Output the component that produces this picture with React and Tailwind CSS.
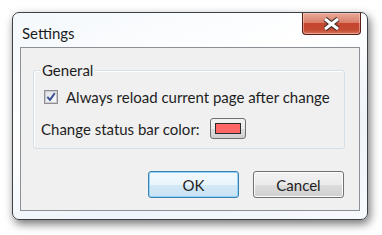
import React from "react";

function CloseX() {
  return (
    <svg width="19" height="14" viewBox="0 0 19 14">
      <g strokeLinecap="butt">
        <path d="M3 2 L16 12 M16 2 L3 12" stroke="#3b2a28" strokeWidth="5.2" />
        <path d="M3 2 L16 12 M16 2 L3 12" stroke="#ffffff" strokeWidth="3" />
      </g>
    </svg>
  );
}

function Check() {
  return (
    <div className="w-[14px] h-[14px] border border-[#8f8f8f] bg-white flex items-center justify-center">
      <div className="w-[12px] h-[12px] border border-[#c9cdd3] bg-gradient-to-br from-[#dfe3e8] to-[#fbfbfb] flex items-center justify-center">
        <svg width="10" height="10" viewBox="0 0 10 10">
          <path d="M1.3 4.8 L4 7.8 L8.8 1.2" fill="none" stroke="#3d5594" strokeWidth="2" />
        </svg>
      </div>
    </div>
  );
}

function Btn({ children, def }) {
  return (
    <div
      className={
        "w-[91px] h-[27px] rounded-[3px] border flex items-center justify-center text-[15px] text-[#1e1e1e] " +
        (def
          ? "border-[#3c7fb1] bg-[linear-gradient(#f2f9fd_0%,#e9f4fb_50%,#d4e9f7_51%,#c9e2f3_100%)] shadow-[inset_0_0_0_1px_#92d4f5]"
          : "border-[#707070] bg-[linear-gradient(#f2f2f2_0%,#ebebeb_50%,#dddddd_51%,#cfcfcf_100%)] shadow-[inset_0_0_0_1px_#fcfcfc]")
      }
    >
      {children}
    </div>
  );
}

export default function App() {
  return (
    <div
      className="w-[382px] h-[235px] bg-white pl-[12px] pt-[12px] overflow-hidden whitespace-nowrap"
      style={{ fontFamily: 'Lato, "Noto Sans", sans-serif' }}
    >
      <div className="w-[356px] h-[208px] rounded-[7px] border border-[#3d4247] bg-[linear-gradient(160deg,#f4f8fc_0%,#ffffff_40%,#eef4fa_70%,#f7fafd_100%)] shadow-[2px_4px_10px_rgba(0,0,0,0.55)] flex flex-col">
        <div className="h-[34px] flex items-start">
          <div className="pl-[9px] pt-[10px] text-[15px] leading-[20px] text-[#1c1c1c]">Settings</div>
          <div className="ml-auto mr-[6px] w-[59px] h-[22px] rounded-b-[4px] border border-t-0 border-[#5a1f16] bg-[linear-gradient(#e9a999_0%,#d9806b_45%,#c7452e_50%,#c24a30_80%,#d87760_100%)] shadow-[inset_0_0_0_1px_rgba(255,210,200,0.5)] flex items-center justify-center">
            <CloseX />
          </div>
        </div>
        <div className="mx-[7px] h-[164px] border border-[#8b9097] bg-[#f0f0f0] flex flex-col text-[15px] leading-[20px] text-[#1e1e1e]">
          <div className="relative ml-[12px] mt-[22px] w-[312px] h-[79px] rounded-[3px] border border-[#d5dfe5] shadow-[inset_1px_1px_0_#ffffff]">
            <div className="absolute left-[6px] top-[-11px] px-[2px] bg-[#f0f0f0] leading-[20px]">General</div>
            <div className="pl-[10px] pt-[16px] flex items-center gap-[8px]">
              <Check />
              <span>Always reload current page after change</span>
            </div>
            <div className="pl-[7px] mt-[11px] flex items-center gap-[10px]">
              <span>Change status bar color:</span>
              <div className="w-[36px] h-[21px] rounded-[3px] border border-[#707070] bg-[linear-gradient(#f2f2f2_0%,#ebebeb_50%,#dddddd_51%,#cfcfcf_100%)] flex items-center justify-center">
                <div className="w-[26px] h-[11px] border border-[#2a2a2a] bg-[#ff6666]" />
              </div>
            </div>
          </div>
          <div className="mt-[22px] pr-[15px] flex justify-end gap-[14px]">
            <Btn def>OK</Btn>
            <Btn>Cancel</Btn>
          </div>
        </div>
      </div>
    </div>
  );
}
